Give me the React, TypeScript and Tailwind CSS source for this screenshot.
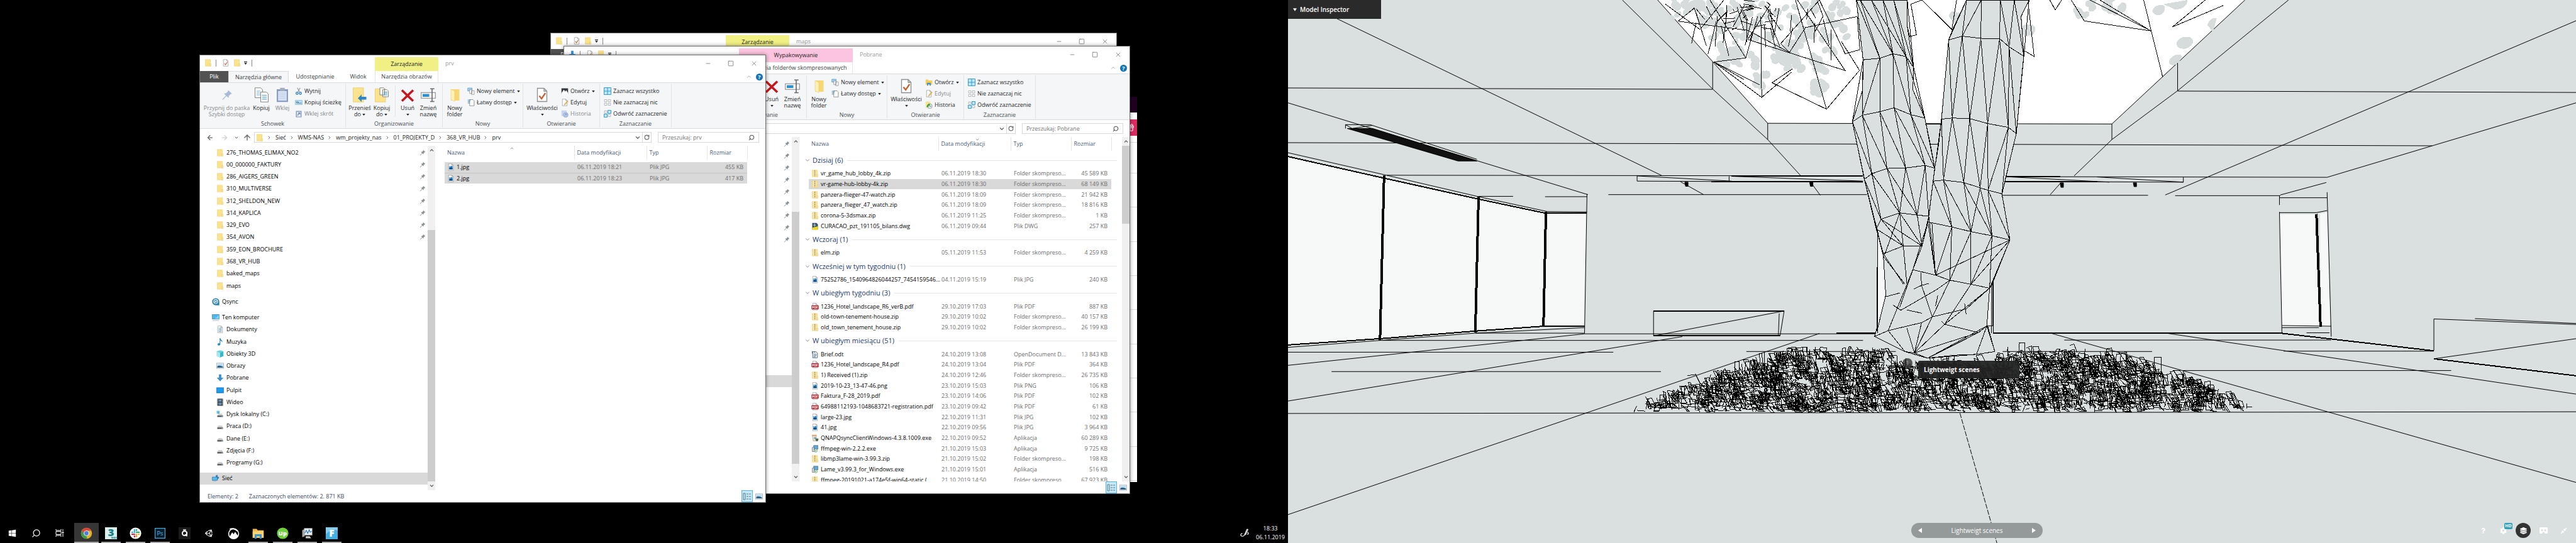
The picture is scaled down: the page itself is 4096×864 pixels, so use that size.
import type { ReactNode } from "react";
import { clsx } from "clsx";
import { FaCog, FaCompressAlt, FaLayerGroup, FaQuestion, FaUnity, FaWindows } from "react-icons/fa";
import {
  ArrowLeft,
  ArrowRight,
  ArrowUp,
  ChevronDown,
  ChevronRight,
  ChevronUp,
  Gift,
  Minus,
  RotateCw,
  Search,
  Square,
  X,
} from "lucide-react";

type IconName =
  | "folder"
  | "openFolder"
  | "check"
  | "zip"
  | "jpg"
  | "pdf"
  | "dwg"
  | "odt"
  | "exe"
  | "setup"
  | "download"
  | "qsync"
  | "computer"
  | "documents"
  | "music"
  | "objects"
  | "pictures"
  | "desktop"
  | "video"
  | "systemDisk"
  | "disk"
  | "network"
  | "pin"
  | "copy"
  | "paste"
  | "cut"
  | "path"
  | "shortcut"
  | "moveTo"
  | "copyTo"
  | "delete"
  | "rename"
  | "newItem"
  | "easyAccess"
  | "openImage"
  | "explorer"
  | "edit"
  | "history"
  | "historyOn"
  | "selectAll"
  | "selectNone"
  | "invert";

const sheet = <path d="M3 1h7l3 3v11H3z M10 1v3h3" fill="#fff" stroke="#8a8f94" strokeWidth="0.9" />;
const folderShape = (
  <>
    <path d="M2 1h11v14H2z" fill="#fbe38e" stroke="#e9c65f" strokeWidth="0.6" />
    <path d="M11.5 10h2.5v5h-2.5z" fill="#fdf0b8" stroke="#e0b84c" strokeWidth="0.6" />
  </>
);
const diskShape = (
  <>
    <path d="M4 7h8l2 4H2z" fill="#c9cccd" />
    <path d="M2 11h12v3H2z" fill="#4b4f52" />
    <path d="M11 12h2v1h-2z" fill="#9fe0d0" />
  </>
);

const ICONS: Record<IconName, ReactNode> = {
  folder: folderShape,
  openFolder: (
    <>
      <path d="M4 2h9v12H4z" fill="#f7d774" />
      <path d="M4 2l4 2v11l-4-2z" fill="#fff0b5" stroke="#ecc961" strokeWidth="0.4" />
    </>
  ),
  check: (
    <>
      {sheet}
      <path d="M5 9l2.4 3L11.5 6" fill="none" stroke="#c8622d" strokeWidth="1.5" />
    </>
  ),
  zip: (
    <>
      {folderShape}
      <path d="M7.5 1v14" stroke="#fff6cf" strokeWidth="3.4" />
      <path d="M7.5 1v14" stroke="#5d5640" strokeWidth="2" strokeDasharray="1 1" />
    </>
  ),
  jpg: (
    <>
      {sheet}
      <path d="M4.5 5.5h7v7h-7z" fill="#1c7fc2" />
      <path d="M4.5 10l2-3 2 2.5 1.5-1.5 1.5 2.5v2h-7z" fill="#0f4f86" />
      <path d="M5.5 8l1-2 1 2" fill="none" stroke="#fff" strokeWidth="0.8" />
    </>
  ),
  pdf: (
    <>
      {sheet}
      <rect x="0.5" y="5" width="15" height="8.5" rx="1" fill="#b3202f" />
      <text x="8" y="11.6" fontSize="6.5" fontWeight="700" textAnchor="middle" fill="#fff">
        PDF
      </text>
    </>
  ),
  dwg: (
    <>
      <path d="M2 1h9l3 3v11H2z" fill="#33536b" />
      <path d="M2 11l12-3v7H2z" fill="#f2d618" />
      <path d="M7 2v7M4 5.5h6" stroke="#e6f0f6" strokeWidth="1" />
    </>
  ),
  odt: (
    <>
      <path d="M3 2h7l3 3v10H3z" fill="#fff" stroke="#3f5a78" strokeWidth="1.2" />
      <path d="M2 1v5M5 8h6M5 10.5h6M5 13h4" stroke="#2f4a68" strokeWidth="1.1" />
      <path d="M5 5q2-3 4 0" fill="none" stroke="#2f4a68" />
    </>
  ),
  exe: (
    <>
      <path d="M5 1h9v8H5z" fill="#58a9dc" stroke="#4c5560" strokeWidth="0.8" />
      <path d="M2 5h4v9H2z" fill="#ddd" stroke="#4c5560" strokeWidth="0.8" />
      <circle cx="9.5" cy="12" r="3.3" fill="#e9f5ea" stroke="#4c7a55" strokeWidth="0.8" />
      <path d="M8.5 10.5v3l2.5-1.5z" fill="#2c9b3b" />
    </>
  ),
  setup: (
    <>
      <path d="M2 2h9l-1 12H4z" fill="#f2e4d2" stroke="#9c8a72" strokeWidth="0.8" />
      <path d="M1 1h10v3H2z" fill="#e2a877" />
      <circle cx="8" cy="8" r="2.5" fill="#77a8c9" />
      <path d="M9 9h6v3q-1 3-3 3t-3-3z" fill="#4c6b50" />
    </>
  ),
  download: <path d="M5.5 1h5v7H15l-7 7.5L1 8h4.5z" fill="#3a8fd0" />,
  qsync: (
    <>
      <path d="M8 .5A7.5 7.5 0 0115.500 8v7.500H8a7.500 7.500 0 010-15z" fill="#2e7fa8" />
      <circle cx="8" cy="7.8" r="5" fill="#d8eef7" />
      <path
        d="M5.3 8a2.7 2.7 0 014.9-1.5M10.7 7.8a2.7 2.7 0 01-4.9 1.5"
        fill="none"
        stroke="#2273a0"
        strokeWidth="1.5"
      />
    </>
  ),
  computer: (
    <>
      <path d="M.5 2h15v9.5H.5z" fill="#4db8f2" stroke="#3b7ea8" />
      <path d="M15 2.5v8.5H6z" fill="#7fd1fa" />
      <path d="M1 14.5h14" stroke="#8fa6b4" />
    </>
  ),
  documents: (
    <>
      {sheet}
      <path d="M5 5h2M8 5h3M5 7.5h6M5 10h2M8 10h3M5 12.5h6" stroke="#3f86b4" strokeWidth="1.1" />
    </>
  ),
  music: (
    <>
      <ellipse cx="5.5" cy="13" rx="3" ry="2.5" fill="#2b87bd" />
      <path d="M7 13V0h1.5q.5 3 3.5 5 1.5 2 0 5 .5-3.5-3.5-5v8z" fill="#2b87bd" />
    </>
  ),
  objects: (
    <>
      <path d="M8 .5l7 2.5v10l-7 2.5-7-2.5V3z" fill="#35b8cc" />
      <path d="M1 3l7 2.5v10l-7-2.5z" fill="#a8e6ee" />
      <path d="M8 .5l7 2.5-7 2.5L1 3z" fill="#69d3e0" />
    </>
  ),
  pictures: (
    <>
      <path d="M.5 2.5h15v11H.5z" fill="#fff" stroke="#8d9599" />
      <path d="M2 4h12v8H2z" fill="#b9dcf2" />
      <path d="M2 9q5-3 12 1v2H2z" fill="#2c6086" />
    </>
  ),
  desktop: (
    <>
      <path d="M.5 2.5h15v11H.5z" fill="#1c9cf0" stroke="#1a6fae" />
      <path d="M1 12.5h14" stroke="#0f5c98" strokeDasharray="1 1" />
    </>
  ),
  video: (
    <>
      <path d="M2 .5h12v15H2z" fill="#2b3136" />
      <path d="M5 2h6v5H5zM5 8.500h6V14H5z" fill="#6d90b8" />
      <path d="M3.5 1v14M12.5 1v14" stroke="#fff" strokeDasharray="1 1" />
    </>
  ),
  systemDisk: (
    <>
      {diskShape}
      <path d="M1 1h2.500v2.500H1zM4 1h2.500v2.500H4zM1 4h2.500v2.500H1zM4 4h2.500v2.500H4z" fill="#2fb0cf" />
    </>
  ),
  disk: diskShape,
  network: (
    <>
      <path d="M8 2l4-1.5v3l3.5 3-3.5 4H8z" fill="#3c81ad" />
      <path d="M.5 5.5h11v7H.5z" fill="#5ab8ee" stroke="#2d78a8" />
      <path d="M3 14.5h6" stroke="#9db4c2" />
    </>
  ),
  pin: (
    <path
      d="M9.5 1l5.5 5.5-2 .3-2.500 2.500-.3 3.200L7.300 9.600 2 15l-.8-.8L6.500 8.800 3.600 6l3.200-.4L9.200 3z"
      fill="currentColor"
    />
  ),
  copy: (
    <>
      <path d="M1 .5h6l2 2V11H1z" fill="#fff" stroke="#777" strokeWidth="0.6" />
      <path d="M2.5 4h4M2.5 6h4M2.5 8h4" stroke="#69aede" strokeWidth="0.8" />
      <path d="M7 5h6l2 2v8.5H7z" fill="#fff" stroke="#777" strokeWidth="0.6" />
      <path d="M8.5 8.500h5M8.5 10.500h5M8.5 12.500h5" stroke="#3b93d0" strokeWidth="0.8" />
    </>
  ),
  paste: (
    <>
      <path d="M2 2h12v13.5H2z" fill="#8a9cc4" />
      <path d="M3.5 4h9v10h-9z" fill="#dbe5f5" />
      <path d="M5.5.5h5V4h-5z" fill="#a5adbd" />
      <path d="M4.5 6h7M4.5 8h7M4.5 10h7M4.5 12h7" stroke="#b4c4e2" strokeWidth="0.6" />
    </>
  ),
  cut: (
    <>
      <path d="M5 1l5 9M11 1L6 10" stroke="#8b9298" strokeWidth="1.4" />
      <circle cx="4.5" cy="12.5" r="2.3" fill="none" stroke="#1f7bb8" strokeWidth="1.6" />
      <circle cx="11.5" cy="12.5" r="2.3" fill="none" stroke="#1f7bb8" strokeWidth="1.6" />
    </>
  ),
  path: (
    <>
      <path d="M.5 3.5h15v9H.5z" fill="#b9ddf5" stroke="#7db7dd" />
      <path d="M3 6l2 4M6 6l2 4M9 9.5h1M11 9.5h1M13 9.5h1" stroke="#17354c" strokeWidth="1.2" />
    </>
  ),
  shortcut: (
    <>
      <path d="M2 2h12v13.5H2z" fill="#8a9cc4" />
      <path d="M4 4h8v10H4z" fill="#e6edf8" />
      <path d="M6 12q0-4 4-5M7 6h3.5v3.5" fill="none" stroke="#6a80ae" strokeWidth="1.4" />
    </>
  ),
  moveTo: (
    <>
      <path d="M1 .5h11v15H1z" fill="#fbe38e" stroke="#e9c65f" strokeWidth="0.5" />
      <path d="M6 11.5l4-4V10h5v3h-5v2.5z" fill="#2f86c6" />
    </>
  ),
  copyTo: (
    <>
      <path d="M1 1.5h11v14H1z" fill="#fbe38e" stroke="#e9c65f" strokeWidth="0.5" />
      <path d="M6 .5h4l1 1V8H6zM9 2.5h4.5L15 4v6H9z" fill="#fff" stroke="#777" strokeWidth="0.6" />
      <path d="M10 5h4M10 6.5h4M10 8h4" stroke="#3b93d0" strokeWidth="0.6" />
    </>
  ),
  delete: <path d="M2 3l12 11.5M14 3L2 14.5" stroke="#c8151b" strokeWidth="2.4" />,
  rename: (
    <>
      <path d="M.5 5.5h15v6H.5z" fill="#fff" stroke="#7d858c" strokeWidth="0.7" />
      <path d="M2 7h7v3H2z" fill="#2c8ed2" />
      <path d="M12 1.5V15M10 1.5h4.5M10 15h4.5" stroke="#666c72" strokeWidth="1.1" />
    </>
  ),
  newItem: (
    <>
      <path d="M1 1.5h9v6H1z" fill="#9fd2f0" stroke="#4a94c2" />
      <path d="M5 5h5v8H5zM9 7h5.5v8H9z" fill="#fff" stroke="#777" strokeWidth="0.9" />
    </>
  ),
  easyAccess: (
    <>
      <path d="M5 2h7l2.5 2.5V15H5z" fill="#fff" stroke="#777" />
      <path d="M1 3h6M1 6h5M1 9h4" stroke="#2f79ad" strokeWidth="1.2" />
    </>
  ),
  openImage: (
    <>
      <path d="M1 2h14v12H1z" fill="#333a40" />
      <path d="M1 12l5-7 3 4 2-3 4 6v3H1z" fill="#fff" />
    </>
  ),
  explorer: (
    <>
      <path d="M1 2h5l1 2h8v9H1z" fill="#f5cd5b" />
      <path d="M4 15V9h8v6H9.500v-3h-3v3z" fill="#3f93c6" />
    </>
  ),
  edit: (
    <>
      {sheet}
      <path d="M7 12l6.500-8L15 5.500 8.500 13l-2 .5z" fill="#f0b43c" stroke="#b07a1f" strokeWidth="0.4" />
    </>
  ),
  history: (
    <>
      <path d="M1 1h11v12H1z" fill="#c4d5ef" />
      <circle cx="10" cy="10.5" r="5" fill="#b0c4e6" stroke="#8ca4cf" />
      <path d="M10 7.5v3l3-2" fill="none" stroke="#6f8abb" />
    </>
  ),
  historyOn: (
    <>
      <path d="M1 1h10v13H1z" fill="#fbe38e" />
      <circle cx="10" cy="10.5" r="5" fill="#e9eef2" stroke="#7a858d" />
      <path d="M3 12q1-6 7-7v2l-4 6z" fill="#36a23c" />
      <path d="M10 8v3h3" fill="none" stroke="#5e676e" />
    </>
  ),
  selectAll: <path d="M.7.7h14.6v14.6H.7zM8 1v14M1 8h14" fill="#bfe6fa" stroke="#2f9ac9" strokeWidth="1.3" />,
  selectNone: (
    <path d="M1.5 2h5v4.500h-5zM9.5 2h5v4.500h-5zM1.5 9.500h5V14h-5zM9.5 9.500h5V14h-5z" fill="#fff" stroke="#9aa0a5" />
  ),
  invert: (
    <>
      <path d="M1.5 2h5v4.500h-5zM9.5 9.500h5V14h-5z" fill="#fff" stroke="#9aa0a5" />
      <path d="M8.7.7h6.6v6.6H8.700zM.7 8.700h6.6v6.6H.7z" fill="#bfe6fa" stroke="#2f9ac9" strokeWidth="1.3" />
    </>
  ),
};

function Icon({ name, className = "size-3" }: { name: IconName; className?: string }) {
  return (
    <svg viewBox="0 0 16 16" className={clsx("shrink-0", className)} aria-hidden="true">
      {ICONS[name]}
    </svg>
  );
}

function Caret() {
  return (
    <svg viewBox="0 0 6 4" className="h-[3px] w-[5px] shrink-0" aria-hidden="true">
      <path d="M0 0h6L3 4z" fill="#222" />
    </svg>
  );
}

/* ---------- Explorer ribbon ---------- */

function RibbonGroup({ label, width, children }: { label: string; width: string; children?: ReactNode }) {
  return (
    <div className={clsx("my-px flex flex-col border-r border-[#e1e3e5]", width)}>
      <div className="flex h-[60px] pt-[3px]">{children}</div>
      <div className="text-center leading-[12px] text-[#4a4f55]">{label}</div>
    </div>
  );
}

type BigButtonProps = { icon: IconName; lines: string[]; width: string; caret?: boolean; muted?: boolean };

function BigButton({ icon, lines, width, caret, muted }: BigButtonProps) {
  return (
    <button
      type="button"
      className={clsx(
        "flex flex-col items-center pt-[3px] leading-[10px] whitespace-nowrap",
        width,
        muted ? "text-[#85898d]" : "text-[#26292c]",
      )}
    >
      <Icon name={icon} className={clsx("mb-[4px] size-6", icon === "pin" && "p-[3px] text-[#a9b8d6]")} />
      {lines.map((line, i) => (
        <span key={line} className="flex items-center gap-[2px]">
          {line}
          {caret && lines.length > 1 && i === lines.length - 1 ? <Caret /> : null}
        </span>
      ))}
      {caret && lines.length === 1 ? (
        <span className="flex h-[10px] items-center">
          <Caret />
        </span>
      ) : null}
    </button>
  );
}

type SmallButtonProps = { icon: IconName; label: string; caret?: boolean; muted?: boolean };

function SmallButton({ icon, label, caret, muted }: SmallButtonProps) {
  return (
    <button
      type="button"
      className={clsx(
        "flex h-[18px] items-center gap-[3px] whitespace-nowrap",
        muted ? "text-[#85898d]" : "text-[#26292c]",
      )}
    >
      <Icon name={icon} />
      {label}
      {caret ? <Caret /> : null}
    </button>
  );
}

function Ribbon({ covered }: { covered: boolean }) {
  return (
    <div className="flex h-[74px] border-y border-[#dadbdc] bg-[#f5f6f7]">
      {covered ? (
        <div className="w-[232px]" />
      ) : (
        <RibbonGroup label="Schowek" width="w-[232px]">
          <BigButton icon="pin" lines={["Przypnij do paska", "Szybki dostęp"]} width="ml-1 w-[77px]" muted />
          <BigButton icon="copy" lines={["Kopiuj"]} width="w-[33px]" />
          <BigButton icon="paste" lines={["Wklej"]} width="w-[34px]" muted />
          <div className="ml-[3px]">
            <SmallButton icon="cut" label="Wytnij" />
            <SmallButton icon="path" label="Kopiuj ścieżkę" />
            <SmallButton icon="shortcut" label="Wklej skrót" muted />
          </div>
        </RibbonGroup>
      )}
      <RibbonGroup label="Organizowanie" width="w-[154px]">
        {covered ? (
          <div className="mr-px w-[79px]" />
        ) : (
          <>
            <BigButton icon="moveTo" lines={["Przenieś", "do"]} width="ml-1 w-[36px]" caret />
            <BigButton icon="copyTo" lines={["Kopiuj", "do"]} width="w-[34px]" caret />
            <div className="mr-px ml-1 h-[50px] border-l border-[#e1e3e5]" />
          </>
        )}
        <BigButton icon="delete" lines={["Usuń"]} width="w-[36px]" caret />
        <BigButton icon="rename" lines={["Zmień", "nazwę"]} width="w-[30px]" />
      </RibbonGroup>
      <RibbonGroup label="Nowy" width="w-[128px]">
        <BigButton icon="openFolder" lines={["Nowy", "folder"]} width="ml-1 w-[30px]" />
        <div className="ml-[5px]">
          <SmallButton icon="newItem" label="Nowy element" caret />
          <SmallButton icon="easyAccess" label="Łatwy dostęp" caret />
        </div>
      </RibbonGroup>
      <RibbonGroup label="Otwieranie" width="w-[122px]">
        <BigButton icon="check" lines={["Właściwości"]} width="ml-1 w-[52px]" caret />
        <div className="ml-1">
          <SmallButton icon={covered ? "explorer" : "openImage"} label="Otwórz" caret />
          <SmallButton icon="edit" label="Edytuj" muted={covered} />
          <SmallButton icon={covered ? "historyOn" : "history"} label="Historia" muted={!covered} />
        </div>
      </RibbonGroup>
      <RibbonGroup label="Zaznaczanie" width="w-[114px]">
        <div className="ml-[6px]">
          <SmallButton icon="selectAll" label="Zaznacz wszystko" />
          <SmallButton icon="selectNone" label="Nie zaznaczaj nic" />
          <SmallButton icon="invert" label="Odwróć zaznaczenie" />
        </div>
      </RibbonGroup>
    </div>
  );
}

/* ---------- Explorer navigation pane ---------- */

type NavItem = { icon: IconName; label: string; root?: boolean; pinned?: boolean; selected?: boolean };

const pinned = (label: string): NavItem => ({ icon: "folder", label, pinned: true });
const folder = (label: string): NavItem => ({ icon: "folder", label });

const PINNED = [
  "276_THOMAS_ELIMAX_NO2",
  "00_000000_FAKTURY",
  "286_AIGERS_GREEN",
  "310_MULTIVERSE",
  "312_SHELDON_NEW",
  "314_KAPLICA",
  "329_EVO",
  "354_AVON",
].map(pinned);

const NAV_GROUPS: NavItem[][] = [
  [...PINNED, ...["359_EON_BROCHURE", "368_VR_HUB", "baked_maps", "maps"].map(folder)],
  [{ icon: "qsync", label: "Qsync", root: true }],
  [
    { icon: "computer", label: "Ten komputer", root: true },
    { icon: "documents", label: "Dokumenty" },
    { icon: "music", label: "Muzyka" },
    { icon: "objects", label: "Obiekty 3D" },
    { icon: "pictures", label: "Obrazy" },
    { icon: "download", label: "Pobrane" },
    { icon: "desktop", label: "Pulpit" },
    { icon: "video", label: "Wideo" },
    { icon: "systemDisk", label: "Dysk lokalny (C:)" },
    { icon: "disk", label: "Praca (D:)" },
    { icon: "disk", label: "Dane (E:)" },
    { icon: "disk", label: "Zdjęcia (F:)" },
    { icon: "disk", label: "Programy (G:)" },
  ],
  [{ icon: "network", label: "Sieć", root: true, selected: true }],
];

function NavPane() {
  return (
    <nav className="flex w-[362px] flex-col gap-[6px] pt-px pb-[9px]" aria-label="Okienko nawigacji">
      {NAV_GROUPS.map((items, g) => (
        <ul key={g} className="flex flex-col" style={{ flex: `${items.length} 1 0px` }}>
          {items.map((item) => (
            <li key={item.label} className={clsx("flex flex-1", item.selected && "bg-[#d9d9d9]")}>
              <button
                type="button"
                className={clsx(
                  "flex w-full items-center gap-[4px] pr-[3px] text-left leading-[16px] text-black",
                  item.root ? "pl-[19px]" : "pl-[26px]",
                )}
              >
                <Icon name={item.icon} />
                <span className="flex-1">{item.label}</span>
                {item.pinned ? <Icon name="pin" className="size-[10px] text-[#8b9297]" /> : null}
              </button>
            </li>
          ))}
        </ul>
      ))}
    </nav>
  );
}

// Right edge of a navigation pane whose labels lie under another window.
function CoveredNavPane() {
  return (
    <div className="flex w-[362px] flex-col items-stretch pt-px" aria-hidden="true">
      {Array.from({ length: 9 }, (_, i) => (
        <div key={i} className="flex h-[19px] items-center justify-end pr-[3px]">
          <Icon name="pin" className="size-[10px] text-[#8b9297]" />
        </div>
      ))}
      <div className="mt-[207px] h-[19px] bg-[#d9d9d9]" />
    </div>
  );
}

function ScrollBar({ before, thumb }: { before: string; thumb: string }) {
  return (
    <div className="flex w-3 shrink-0 flex-col bg-[#f0f0f0]">
      <ChevronUp className="mx-auto h-[14px] w-[9px] text-[#505050]" strokeWidth={3} />
      <div className={before} />
      <div className={clsx("bg-[#cdcdcd]", thumb)} />
      <div className="flex-1" />
      <ChevronDown className="mx-auto h-[14px] w-[9px] text-[#505050]" strokeWidth={3} />
    </div>
  );
}

/* ---------- Explorer file list ---------- */

type FileRow = { icon: IconName; name: string; date: string; kind: string; size: string; selected?: boolean };
type FileGroup = { title?: string; files: FileRow[] };

const ZIP = "Folder skompreso...";
const file = (icon: IconName, name: string, date: string, kind: string, size: string, selected = false): FileRow => ({
  icon,
  name,
  date,
  kind,
  size,
  selected,
});

const FILES_PRV: FileGroup[] = [
  {
    files: [
      file("jpg", "1.jpg", "06.11.2019 18:21", "Plik JPG", "455 KB", true),
      file("jpg", "2.jpg", "06.11.2019 18:23", "Plik JPG", "417 KB", true),
    ],
  },
];

const FILES_POBRANE: FileGroup[] = [
  {
    title: "Dzisiaj (6)",
    files: [
      file("zip", "vr_game_hub_lobby_4k.zip", "06.11.2019 18:30", ZIP, "45 589 KB"),
      file("zip", "vr-game-hub-lobby-4k.zip", "06.11.2019 18:30", ZIP, "68 149 KB", true),
      file("zip", "panzera-flieger-47-watch.zip", "06.11.2019 18:09", ZIP, "21 942 KB"),
      file("zip", "panzera_flieger_47_watch.zip", "06.11.2019 18:09", ZIP, "18 816 KB"),
      file("zip", "corona-5-3dsmax.zip", "06.11.2019 11:25", ZIP, "1 KB"),
      file("dwg", "CURACAO_pzt_191105_bilans.dwg", "06.11.2019 09:44", "Plik DWG", "257 KB"),
    ],
  },
  { title: "Wczoraj (1)", files: [file("zip", "elm.zip", "05.11.2019 11:53", ZIP, "4 259 KB")] },
  {
    title: "Wcześniej w tym tygodniu (1)",
    files: [file("jpg", "75252786_1540964826044257_7454159546...", "04.11.2019 15:19", "Plik JPG", "240 KB")],
  },
  {
    title: "W ubiegłym tygodniu (3)",
    files: [
      file("pdf", "1236_Hotel_landscape_R6_verB.pdf", "29.10.2019 17:03", "Plik PDF", "887 KB"),
      file("zip", "old-town-tenement-house.zip", "29.10.2019 10:02", ZIP, "40 157 KB"),
      file("zip", "old_town_tenement_house.zip", "29.10.2019 10:02", ZIP, "26 199 KB"),
    ],
  },
  {
    title: "W ubiegłym miesiącu (51)",
    files: [
      file("odt", "Brief.odt", "24.10.2019 13:08", "OpenDocument D...", "13 843 KB"),
      file("pdf", "1236_Hotel_landscape_R4.pdf", "24.10.2019 13:04", "Plik PDF", "364 KB"),
      file("zip", "1) Received (1).zip", "24.10.2019 12:46", ZIP, "26 735 KB"),
      file("jpg", "2019-10-23_13-47-46.png", "23.10.2019 15:03", "Plik PNG", "106 KB"),
      file("pdf", "Faktura_F-28_2019.pdf", "23.10.2019 14:06", "Plik PDF", "102 KB"),
      file("pdf", "64988112193-1048683721-registration.pdf", "23.10.2019 09:42", "Plik PDF", "61 KB"),
      file("jpg", "large-23.jpg", "22.10.2019 11:31", "Plik JPG", "102 KB"),
      file("jpg", "41.jpg", "22.10.2019 09:56", "Plik JPG", "3 964 KB"),
      file("setup", "QNAPQsyncClientWindows-4.3.8.1009.exe", "22.10.2019 09:52", "Aplikacja", "60 289 KB"),
      file("exe", "ffmpeg-win-2.2.2.exe", "21.10.2019 15:03", "Aplikacja", "9 725 KB"),
      file("zip", "libmp3lame-win-3.99.3.zip", "21.10.2019 15:02", ZIP, "198 KB"),
      file("exe", "Lame_v3.99.3_for_Windows.exe", "21.10.2019 15:01", "Aplikacja", "516 KB"),
      file("zip", "ffmpeg-20191021-a174e5f-win64-static (...", "21.10.2019 14:50", ZIP, "67 923 KB"),
    ],
  },
];

function HeaderCell({ label, sort, width }: { label: string; sort?: "up" | "down"; width: string }) {
  const Arrow = sort === "up" ? ChevronUp : ChevronDown;
  return (
    <th
      scope="col"
      className={clsx("relative border-r border-[#e5e5e5] pl-[4px] text-left font-normal text-[#4c607a]", width)}
    >
      {label}
      {sort ? <Arrow className="absolute top-0 left-1/2 size-2 text-[#666]" /> : null}
    </th>
  );
}

function FileTable({ groups, grouped }: { groups: FileGroup[]; grouped: boolean }) {
  return (
    <div className="relative h-full min-h-0 flex-1 overflow-hidden pl-[15px]">
      <table
        className={clsx(
          "w-[481px] table-fixed border-collapse leading-[14px] whitespace-nowrap text-[#6d6d6d]",
          grouped && "absolute h-[554px]",
        )}
      >
        <thead>
          <tr className="h-[22px]">
            <HeaderCell label="Nazwa" width="w-[206px]" sort={grouped ? undefined : "up"} />
            <HeaderCell label="Data modyfikacji" width="w-[115px]" sort={grouped ? "down" : undefined} />
            <HeaderCell label="Typ" width="w-[96px]" />
            <HeaderCell label="Rozmiar" width="w-[64px]" />
          </tr>
        </thead>
        {groups.map((group, g) => (
          <tbody key={g}>
            {g === 0 ? (
              <tr className={grouped ? "h-[2px]" : "h-[4px]"}>
                <td colSpan={4} className="p-0" />
              </tr>
            ) : null}
            {group.title ? (
              <tr className="h-[25px]">
                <th colSpan={4} scope="rowgroup" className="p-0 font-normal">
                  <div className="-mr-[9px] -ml-[7px] flex items-center gap-[3px] text-[11px] text-[#1e3b6e]">
                    <ChevronDown className="size-[10px] text-[#777]" />
                    {group.title}
                    <span className="ml-[4px] flex-1 border-t border-[#e0e3e8]" />
                  </div>
                </th>
              </tr>
            ) : null}
            {group.files.map((f) => (
              <tr
                key={f.name}
                className={clsx(
                  grouped ? "h-[16px]" : "h-[17px]",
                  f.selected && "bg-[#d9d9d9]",
                  f.selected && !grouped && "border-b border-[#c3c3c3] last:border-0",
                )}
              >
                <td className="p-0 pl-[4px]">
                  <span className="flex items-center gap-[3px] text-black">
                    <Icon name={f.icon} />
                    {f.name}
                  </span>
                </td>
                <td className="p-0 pl-[5px]">{f.date}</td>
                <td className="p-0 pl-[5px]">{f.kind}</td>
                <td className="p-0 pr-[6px] text-right">{f.size}</td>
              </tr>
            ))}
          </tbody>
        ))}
      </table>
    </div>
  );
}

/* ---------- Explorer window ---------- */

type ExplorerProps = {
  title: string;
  position: string;
  icon?: IconName;
  toolLabel: string;
  toolTab: string;
  toolWidth: string;
  toolColor: string;
  /** The left part of the window lies under another one. */
  covered?: boolean;
  children?: ReactNode;
};

function ExplorerWindow({
  title,
  position,
  icon = "folder",
  toolLabel,
  toolTab,
  toolWidth,
  toolColor,
  covered = false,
  children,
}: ExplorerProps) {
  return (
    <section
      aria-label={title}
      className={clsx(
        "absolute flex h-[711px] w-[899px] flex-col bg-white shadow-[0_0_6px_1px_rgba(0,0,0,0.45)] outline-1 outline-[#6f6f6f]",
        position,
      )}
    >
      <header className="flex h-[25px] text-[#222]">
        <div className="flex w-[278px] items-center pb-px pl-[7px]">
          <Icon name={icon} />
          <span className="mx-[6px] h-[11px] border-l border-[#888]" />
          <Icon name="check" className="ml-[3px] size-3" />
          <Icon name="folder" className="ml-[6px] size-3" />
          <span className="ml-[5px] flex flex-col items-center gap-px">
            <span className="w-[5px] border-t border-black" />
            <Caret />
          </span>
          <span className="ml-[7px] h-[11px] border-l border-[#888]" />
        </div>
        <div className={clsx("mt-[3px] flex items-center justify-center", toolWidth, toolColor)}>{toolLabel}</div>
        <h2 className="flex flex-1 items-center pl-[11px] text-[#9a9a9a]">{title}</h2>
        <div className="flex items-center text-[#777]">
          <button type="button" aria-label="Minimalizuj" className="flex w-9 justify-center">
            <Minus className="size-[10px]" />
          </button>
          <button type="button" aria-label="Maksymalizuj" className="flex w-9 justify-center">
            <Square className="size-[10px]" />
          </button>
          <button type="button" aria-label="Zamknij" className="flex w-[37px] justify-center">
            <X className="size-[12px]" strokeWidth={1.5} />
          </button>
        </div>
      </header>

      <div className="flex h-[18px] text-[#3b3f44]">
        <button type="button" className="w-[45px] bg-[#525252] text-white">
          Plik
        </button>
        {covered ? (
          <div className="w-[233px]" />
        ) : (
          <>
            <button type="button" className="-mb-px w-[96px] border-x border-t border-[#dadbdc] bg-[#f5f6f7]">
              Narzędzia główne
            </button>
            <button type="button" className="w-[84px]">
              Udostępnianie
            </button>
            <button type="button" className="w-[53px]">
              Widok
            </button>
          </>
        )}
        <button type="button" className={clsx("border-x border-[#e4e4e4] whitespace-nowrap", toolWidth)}>
          {toolTab}
        </button>
        <div className="flex flex-1 items-center justify-end gap-[6px] pr-[4px]">
          <button type="button" aria-label="Minimalizuj Wstążkę">
            <ChevronUp className="size-[10px] text-[#999]" />
          </button>
          <button
            type="button"
            aria-label="Pomoc"
            className="size-[11px] rounded-full bg-[#1273b5] text-[9px] leading-[11px] font-bold text-white"
          >
            ?
          </button>
        </div>
      </div>
      {children}
    </section>
  );
}

function AddressBar({ title, crumbs }: { title: string; crumbs: string[] }) {
  return (
    <div className="flex h-[27px] items-center pr-[10px] text-[#222]">
      <div className="flex w-[86px] items-center pl-[10px] text-[#6a6a6a]">
        <ArrowLeft className="size-3" strokeWidth={2.5} />
        <ArrowRight className="ml-[11px] size-3 text-[#d0d0d0]" strokeWidth={2.5} />
        <ChevronDown className="ml-[9px] size-[8px]" strokeWidth={3} />
        <ArrowUp className="ml-[6px] size-[14px]" strokeWidth={2.5} />
      </div>
      <div className="flex h-[17px] flex-1 items-center border border-[#d9d9d9] pl-[2px]">
        <Icon name="folder" />
        {crumbs.map((crumb) => (
          <span key={crumb} className="flex items-center">
            <ChevronRight className="mr-[6px] ml-[5px] size-[8px] text-[#777]" strokeWidth={3} />
            <button type="button">{crumb}</button>
          </span>
        ))}
        <ChevronDown className="mr-[2px] ml-auto size-[10px] text-[#666]" strokeWidth={3} />
        <button
          type="button"
          aria-label="Odśwież"
          className="flex h-full w-[14px] items-center justify-center border-l border-[#d9d9d9] text-[#666]"
        >
          <RotateCw className="size-[9px]" strokeWidth={3} />
        </button>
      </div>
      <label className="ml-[10px] flex h-[17px] w-[161px] items-center border border-[#d9d9d9] pr-[6px] pl-[6px]">
        <input
          type="text"
          aria-label={`Przeszukaj: ${title}`}
          placeholder={`Przeszukaj: ${title}`}
          className="min-w-0 flex-1 outline-none placeholder:text-[#757575]"
        />
        <Search className="size-[10px] -scale-x-100 text-[#555]" strokeWidth={2.5} />
      </label>
    </div>
  );
}

function StatusBar({ items }: { items: string[] }) {
  return (
    <footer className="flex h-[19px] items-center pl-[12px] text-[#3c4a60]">
      {items.map((item) => (
        <span key={item} className="mr-[17px]">
          {item}
        </span>
      ))}
      <button
        type="button"
        aria-label="Szczegóły"
        className="ml-auto flex h-full w-[18px] items-center justify-center border border-[#58b5d8] bg-[#c5e8f7]"
      >
        <svg viewBox="0 0 14 12" className="h-3 w-[14px]" aria-hidden="true">
          <path d="M1 1h3v10H1zM6 2h3M10 2h3M6 6h3M10 6h3M6 10h3M10 10h3" fill="none" stroke="#5b7484" />
        </svg>
      </button>
      <button type="button" aria-label="Duże miniatury" className="mx-[4px]">
        <Icon name="pictures" />
      </button>
    </footer>
  );
}

/* ---------- Taskbar ---------- */

const TASKS: { label: string; art: ReactNode; running?: boolean; active?: boolean }[] = [
  {
    label: "Chrome",
    running: true,
    active: true,
    art: (
      <>
        <circle cx="12" cy="12" r="11" fill="#e4b52c" />
        <path d="M2.5 6.500L12 12l1 11A11 11 0 012.500 6.500z" fill="#3e9b50" />
        <path d="M12 7h9.800A11 11 0 002.500 6.500L7.500 14z" fill="#d7493b" />
        <circle cx="12" cy="12" r="5.5" fill="#fff" />
        <circle cx="12" cy="12" r="4.3" fill="#4a7fe0" />
      </>
    ),
  },
  {
    label: "3ds Max",
    running: true,
    art: (
      <>
        <path d="M0 0h24v24H0z" fill="#d9f0ef" />
        <text x="12" y="18" fontSize="21" fontWeight="800" textAnchor="middle" fill="#14808a">
          3
        </text>
        <text x="18" y="23" fontSize="5" fontWeight="700" textAnchor="middle" fill="#14808a">
          MAX
        </text>
      </>
    ),
  },
  {
    label: "Slack",
    running: true,
    art: (
      <>
        <circle cx="12" cy="12" r="11.5" fill="#fff" />
        <g strokeWidth="3" strokeLinecap="round">
          <path d="M10 5v5M5 10h1" stroke="#35b5d8" />
          <path d="M14 10h5M14 5v1" stroke="#2fa673" />
          <path d="M14 14v5M19 14h-1" stroke="#e3ab2c" />
          <path d="M10 14H5M10 19v-1" stroke="#d42458" />
        </g>
      </>
    ),
  },
  {
    label: "Photoshop",
    running: true,
    art: (
      <>
        <path d="M2 2h20v20H2z" fill="#0a1c29" stroke="#3fa9d8" strokeWidth="1.5" />
        <text x="12" y="16.5" fontSize="12" textAnchor="middle" fill="#4fb9ea">
          Ps
        </text>
      </>
    ),
  },
  {
    label: "Quixel",
    art: (
      <>
        <path d="M0 0h24v24H0z" fill="#1b1b1b" />
        <circle cx="12" cy="12" r="4.5" fill="none" stroke="#fff" strokeWidth="2.5" />
        <path d="M10 6V5h4v1M13 14l4 4M16.500 9v8" fill="none" stroke="#fff" strokeWidth="2" />
      </>
    ),
  },
  {
    label: "Unity",
    art: (
      <g color="#eee">
        <FaUnity x="3" y="3" size={18} />
      </g>
    ),
  },
  {
    label: "Marmoset",
    art: (
      <>
        <circle cx="12" cy="13" r="10" fill="none" stroke="#fff" strokeWidth="2" />
        <path d="M4 19l5-9 3 4 3-5 6 9q-3 5-9 5t-8-4z" fill="#fff" />
        <path d="M4 4q8-4 16 4" fill="none" stroke="#fff" strokeWidth="2" />
      </>
    ),
  },
  {
    label: "Eksplorator plików",
    running: true,
    art: (
      <>
        <path d="M1 3h8l2 3h12v15H1z" fill="#f0b94d" />
        <path d="M1 8h22v13H1z" fill="#f9d476" />
        <path d="M5 23v-9h14v9h-4v-5H9v5z" fill="#3f93c6" />
      </>
    ),
  },
  {
    label: "Upwork",
    running: true,
    art: (
      <>
        <circle cx="12" cy="12" r="11.5" fill="#6fcf3c" />
        <text x="12" y="16" fontSize="12" fontWeight="800" textAnchor="middle" fill="#fff">
          Up
        </text>
      </>
    ),
  },
  {
    label: "Monitor zasobów",
    running: true,
    art: (
      <>
        <path d="M2 6l5-3v15l-5 2z" fill="#aaa" />
        <path d="M6 2h16v14H6z" fill="#e9edf0" stroke="#888" />
        <path d="M7 12l3-6 3 6 3-7 2 5 3-2" fill="none" stroke="#2f79b5" strokeWidth="1.5" />
        <path d="M9 18h8l3 4H9z" fill="#c9c9c9" />
      </>
    ),
  },
  {
    label: "F",
    running: true,
    art: (
      <>
        <path d="M0 0h24v24H0z" fill="#45aee2" />
        <path d="M0 14q12-12 24-8V0H0z" fill="#82cdf0" />
        <text x="12" y="19" fontSize="20" fontWeight="800" textAnchor="middle" fill="#fff">
          F
        </text>
      </>
    ),
  },
];

function Taskbar() {
  return (
    <footer className="flex h-8 items-stretch bg-black text-white">
      <button type="button" aria-label="Start" className="flex w-[38px] items-center justify-center">
        <FaWindows className="size-[13px]" />
      </button>
      <button type="button" aria-label="Wyszukaj" className="flex w-[38px] items-center justify-center">
        <Search className="size-[15px] -scale-x-100" strokeWidth={2} />
      </button>
      <button type="button" aria-label="Widok zadań" className="mr-[4px] flex w-[38px] items-center justify-center">
        <svg viewBox="0 0 14 14" className="size-[14px]" aria-hidden="true">
          <path d="M1 1v2h8V1M1 13v-2h8v2M1 4.500h8v5H1zM12 1v3M12 8v5M11 5.500h2V7h-2z" fill="none" stroke="#fff" />
        </svg>
      </button>
      {TASKS.map((task) => (
        <button
          key={task.label}
          type="button"
          aria-label={task.label}
          className={clsx("relative flex w-[39px] items-center justify-center", task.active && "bg-[#363636]")}
        >
          <svg viewBox="0 0 24 24" className="size-[19px]" aria-hidden="true">
            {task.art}
          </svg>
          {task.running ? (
            <span
              className={clsx("absolute bottom-0 h-[2px] bg-[#a9a9a9]", task.active ? "inset-x-0" : "inset-x-[4px]")}
            />
          ) : null}
        </button>
      ))}
      <div className="ml-auto flex items-center gap-[11px] pr-[5px]">
        <svg viewBox="0 0 16 16" className="size-[14px]" aria-hidden="true">
          <path
            d="M4 9q-3 0-3 2.500T4 14q3 0 4-3l4-9q1-1.500 2 0L9 12M13 7q2 0 2 2t-3 1"
            fill="none"
            stroke="#fff"
            strokeWidth="1.3"
          />
        </svg>
        <time className="text-center text-[9px] leading-[14px]">
          18:33
          <br />
          06.11.2019
        </time>
      </div>
    </footer>
  );
}

/* ---------- Wireframe scene ---------- */

type Point = [number, number];

function createRandom(seed: number) {
  let s = seed;
  return () => {
    s = (s * 1664525 + 1013904223) % 4294967296;
    return s / 4294967296;
  };
}

// Trunk cross-sections, top to bottom. Neighbouring rings are joined by triangle edges.
const LEFT_TRUNK: Point[][] = [
  [[518, 0], [528, 0], [556, 0], [585, 0], [612, 0], [646, 0]],
  [[535, 217], [577, 211], [610, 195], [643, 205], [662, 245]],
  [[508, 442], [533, 418], [577, 405], [613, 391], [655, 416], [690, 428]],
  [[538, 650], [557, 630], [595, 611], [642, 609], [691, 600], [715, 610]],
  [[568, 830], [580, 795], [627, 772], [671, 780], [700, 784]],
  [[586, 920], [636, 892], [683, 892]],
];
const RIGHT_TRUNK: Point[][] = [
  [[795, 0], [832, 0], [880, 0], [915, 0], [952, 0]],
  [[750, 145], [784, 131], [831, 139], [878, 140], [902, 170], [939, 204]],
  [[732, 432], [759, 428], [803, 430], [848, 448], [900, 462], [920, 484]],
  [[711, 657], [737, 653], [788, 662], [829, 681], [849, 690], [884, 703]],
  [[698, 805], [758, 823], [806, 840], [859, 855], [904, 870]],
  [[660, 978], [717, 998], [753, 1016], [806, 1031], [853, 1045]],
];

function meshPath(rings: Point[][]) {
  const parts: string[] = [];
  rings.forEach((ring, r) => {
    parts.push("M" + ring.map((p) => p.join(" ")).join("L"));
    const next = rings[r + 1];
    if (!next) return;
    ring.forEach((p, i) => {
      const at = Math.round((i / (ring.length - 1)) * (next.length - 1));
      parts.push(`M${p[0]} ${p[1]}L${next[at][0]} ${next[at][1]}`);
      if (next[at + 1]) parts.push(`M${p[0]} ${p[1]}L${next[at + 1][0]} ${next[at + 1][1]}`);
    });
  });
  return parts.join("");
}

function plantPaths() {
  const rnd = createRandom(7);
  const blades: string[] = [];
  for (let i = 0; i < 1900; i++) {
    const t = Math.pow(rnd(), 0.8);
    const left = 330 - 390 * t;
    const right = 1130 + 390 * Math.pow(t, 0.8);
    const x = left + (right - left) * rnd();
    const y = 1278 + 212 * t;
    if (x > 600 && x < 870 && y < 1320) continue;
    const w = 4 + rnd() * 14;
    const h = Math.min(8 + rnd() * 40, 1497 - y + 14);
    const lean = (rnd() - 0.7) * 26;
    const top = y - h * 0.7;
    const bottom = Math.min(y + h * 0.3, 1497);
    blades.push(
      rnd() > 0.45
        ? `M${x | 0} ${top | 0}l${w | 0} ${-4 + ((rnd() * 8) | 0)}L${(x + w - lean) | 0} ${bottom | 0}L${(x - lean) | 0} ${bottom | 0}Z`
        : `M${x | 0} ${top | 0}L${(x - lean) | 0} ${bottom | 0}M${x | 0} ${y | 0}l${(w * 1.6) | 0} ${(rnd() * 16 - 8) | 0}`,
    );
  }
  return blades.join("");
}

function darkPlantPaths() {
  const rnd = createRandom(31);
  let d = "";
  for (let i = 0; i < 300; i++) {
    const t = rnd();
    const x = 260 - 150 * t + (900 + 250 * t) * rnd();
    const y = 1300 + 180 * t;
    if (x > 600 && x < 870 && y < 1320) continue;
    d += `M${x | 0} ${y | 0}l${(2 + rnd() * 5) | 0} ${(8 + rnd() * 14) | 0}`;
  }
  return d;
}

function twigPaths() {
  const rnd = createRandom(12);
  let d = "";
  for (let i = 0; i < 34; i++) {
    const x = 110 + 350 * rnd();
    const y = 110 * rnd();
    d += `M${x | 0} ${y | 0}l${(rnd() * 60 - 30) | 0} ${(30 + rnd() * 90) | 0}`;
  }
  for (let i = 0; i < 26; i++) {
    const x = 190 + 130 * rnd();
    const y = 110 * rnd();
    d += `M${x | 0} ${y | 0}l${(rnd() * 70 - 35) | 0} ${(rnd() * 30 - 15) | 0}`;
  }
  return d;
}

function leafShapes() {
  const rnd = createRandom(5);
  // centre x, centre y, spread, number of leaves
  const clusters: [number, number, number, number][] = [
    [90, 30, 40, 14],
    [190, 70, 60, 34],
    [300, 60, 80, 34],
    [220, 190, 45, 22],
    [340, 200, 42, 34],
    [285, 290, 18, 10],
    [425, 320, 18, 16],
    [440, 220, 34, 16],
    [440, 70, 60, 30],
    [948, 110, 10, 10],
    [1090, 30, 26, 8],
    [1170, 15, 30, 8],
    [770, 60, 10, 5],
  ];
  return clusters.flatMap(([cx, cy, spread, count]) =>
    Array.from({ length: count }, () => ({
      x: cx + (rnd() * 2 - 1) * spread,
      y: cy + (rnd() * 2 - 1) * spread * 1.2,
      r: 7 + rnd() * 5,
      angle: rnd() * 60 - 30,
    })),
  );
}

const TREE_MESH = meshPath(LEFT_TRUNK) + meshPath(RIGHT_TRUNK);
const PLANTS = plantPaths();
const DARK_PLANTS = darkPlantPaths();
const TWIGS = twigPaths();
const LEAVES = leafShapes();

const ROOM_LINES = `
M407 0L517 257L584 403L624 507M450 0L584 356L1003 358L1165 0M1218 0L1083 262L1003 403L957 508
M517 178V257M1083 182V262M584 356V403M1003 358V403
M0 254L517 258M1083 263L1568 267M0 412L693 416M883 417L1393 421M120 506L700 508M873 510L1265 512
M390 562H705M868 564H1047M1080 565H1208M232 567H274M313 568H364
M30 20L375 415L455 507M0 297L365 562M1568 60L1068 563M1568 297L1393 421L1265 512M1264 527L1208 563
M478 525L506 562M636 525L648 564M940 530L928 562
M425 508V523L700 526M425 508L540 523M537 509V523M540 509L700 523M1090 512V526L873 524M880 511L1000 526M985 511L1090 526
M0 441L120 506L232 568L316 611L364 612M364 560L361 963
M0 1003L112 983L228 962L361 946M113 983H700M228 962H361M361 964H715
M945 982H1270M0 1017H396M558 1015H740M870 1015H1052M0 1055L361 964M0 1158L480 972M53 1073H454
M647 963L0 1486M930 963L1568 1393M1072 963L1568 1138M1212 1014H1395M1090 1070H1416M0 1194L1568 1189
M445 898H604L599 970H445ZM445 970L604 898M598 905L597 968
M1395 1012V921L1568 937M1445 920L1568 934M1395 1036L1568 978
M1207 565V592M1207 612L1210 962M1207 571H1265M1265 555L1270 972M1207 614L1252 614L1265 608M1210 940L1270 942M1210 946H1255M1240 961H1268
M580 1018V1070M1090 1070V1110`;

const ROOM_BOLD = `
M0 452L118 515L232 575L314 616L364 616M0 996L112 978L228 956L311 942L361 942
M668 962H720M858 962H1210M1208 962L1395 1013M1395 1036L1568 1085M445 970H599M445 898H604M540 509H700M515 525H700M873 510H940M873 525H985`;

function Scene() {
  return (
    <svg
      viewBox="0 0 1568 1568"
      preserveAspectRatio="none"
      shapeRendering="crispEdges"
      className="absolute inset-0 size-full [&_path]:[vector-effect:non-scaling-stroke]"
      fill="none"
      stroke="#000"
      strokeWidth="1"
      role="img"
      aria-label="Model 3D"
    >
      <path d="M450 0L584 356L1003 358L1165 0Z" fill="#fff" stroke="none" />
      <path
        d="M0 452L118 515L232 575L314 616H364L361 942H311L228 956L112 978L0 996ZM1207 619H1253L1257 943H1210ZM1256 617L1266 613L1269 943H1258Z"
        fill="#f6f9f8"
        stroke="none"
      />
      <path d={ROOM_LINES} />
      <path d={ROOM_BOLD} strokeWidth="2" />
      <path d="M117 507L112 983M232 568L228 960M314 612L311 943M1252 618L1257 943" strokeWidth="4" />
      <path d="M818 1193L863 1568" strokeDasharray="8 2" />
      <path d="M70 371V360H100L230 460M70 360L78 371L103 362" />
      <path d="M72 371H103L230 465H207Z" fill="#111" />
      <path d="M483 526h4v12h-3zM635 526h4v12h-3zM940 528h4v13h-3zM1029 528h4v11h-3z" fill="#000" />

      {/* tree and flower bed */}
      <svg x="441" y="0" width="759.5" height="1248.6" viewBox="0 0 1568 1568" preserveAspectRatio="none" overflow="visible">
        <g fill="#d5dcdb" stroke="none">
          {LEAVES.map((leaf, i) => (
            <ellipse
              key={i}
              cx={leaf.x}
              cy={leaf.y}
              rx={leaf.r}
              ry={leaf.r * 1.5}
              transform={`rotate(${leaf.angle} ${leaf.x} ${leaf.y})`}
            />
          ))}
          <path d="M1262 40q4-24 28-22q10 20-8 36q-16 4-20-14zM1290 15l60-15q0 30-30 35zM1322 160q4-30 34-26q20 20-8 42q-20 6-26-16zM1304 220q10-26 30-22q6 20-18 40q-14-2-12-18zM1400 90q8-30 24-24l-10 50z" />
        </g>
        <path d={TWIGS} />
        <path
          d="M38 15L125 107L185 0M70 77L245 110L350 190L390 100L520 60M70 77L110 30M370 0L490 256L245 143L300 20M365 0L443 396L306 300L357 250
          M443 396L526 255L480 150M278 60L280 353L160 225L275 308M280 353L355 262M240 210L150 0M240 210L270 60M490 195L527 180L520 60M490 195L425 0L328 158L350 190
          M683 0L758 107L770 0M646 95L652 133L669 126L655 15L683 0M949 0L965 205L938 182M1004 0L1018 36L1034 0M1058 0L1091 76L1258 112L1105 0M1258 112L1130 0M1240 0L1288 280M1312 98L1395 0M1312 98L1440 20M160 225L240 210M235 288L160 225"
        />
        <path
          d="M518 0L535 220L533 330L508 442L540 660L572 843L586 930L592 1070L564 1220L640 1275L697 1299L820 1285L866 1275L848 1182L853 1045L862 1020L904 870L884 705L894 640L920 484L932 300L939 200L932 60L952 0H795L760 107L750 145L732 430L725 523L715 610L704 523L690 428L660 325L662 250L646 95V0Z"
          fill="#dae0df"
        />
        <path d="M571 843L586 930L592 1070L570 1200Z" fill="#f6f9f8" />
        <path d="M853 1045L860 1030V1182H846Z" fill="#f6f9f8" />
        <path d="M571 843V1208M858 1030V1208M862 1020V1208M846 1182H860M470 1208H566" />
        <path d={TREE_MESH} />
        <path
          d="M690 450H730M704 523H725M586 930L640 1030M586 920L636 1030M592 1076L628 1062M610 1106L630 1125L720 1050L753 1016M627 772L590 920M636 892L645 1030M683 892L700 784L711 657M698 805L683 892L660 978
          M660 978L598 1199L564 1220M660 978L627 1115M682 1035L662 1048M680 990L682 1035L700 1028M682 1035L709 1149M753 1016L709 1149L682 1170L598 1199L640 1275M806 1031L740 1176L825 1206L846 1182
          M853 1045L740 1176M853 1045L794 1120L709 1149M790 1100L794 1140M732 1165L740 1176L664 1280M709 1149L664 1280M645 1190L664 1280M682 1170L664 1280M825 1206L697 1299M846 1182L697 1299M846 1182L820 1285M846 1182L866 1275M825 1206L664 1280
          M640 1275L664 1280L697 1299L765 1288L820 1285L866 1275M645 1124L683 1136M723 1070L717 1110M717 998L708 810M700 784L717 998L904 870M806 840V1031L904 870M758 823L717 998"
        />
        <path d="M347 1262l18-4l12 40M380 1260h14v34M927 1244h15v40M928 1244l-2 40M1195 1300l14-6l14 50l-14 4zM1267 1295h18v60h-20zM1250 1332h18v40M212 1312h12v40h-12zM180 1350h24l-8 40h-24zM94 1362l20-4l12 34M20 1452l14-4l14 30M52 1430l10-6M1055 1252l10-4l8 30M945 1262l14-8v30M1400 1415h20l-4 30" />
        <path d={PLANTS} />
        <path d={DARK_PLANTS} strokeWidth="2" />
        <path d="M380 1497Q430 1445 475 1440Q530 1445 575 1497M395 1497Q440 1456 480 1450Q525 1456 562 1497M410 1497Q445 1468 480 1462Q520 1468 548 1497M425 1497Q450 1480 480 1476Q510 1480 530 1497M440 1446L430 1497M470 1440V1497M500 1442L510 1497M535 1456L550 1497" />
      </svg>
    </svg>
  );
}

function SceneViewer() {
  return (
    <main className="relative flex-1 overflow-hidden bg-[#dae0df] text-[10px] text-white">
      <Scene />
      <button
        type="button"
        className="absolute top-0 left-0 flex h-[30px] w-[148px] items-center gap-[5px] bg-[#2a2a2a] pl-[8px] font-semibold"
      >
        <svg viewBox="0 0 8 6" className="h-[5px] w-[6px]" aria-hidden="true">
          <path d="M0 0h8L4 6z" fill="#fff" />
        </svg>
        Model Inspector
      </button>

      <button
        type="button"
        aria-label="Adnotacja 1"
        className="absolute top-[570px] left-[977px] size-4 rounded-full bg-[#333]/80 text-[9px] leading-4 text-[#aaa]"
      >
        1
      </button>
      <div
        role="tooltip"
        className="absolute top-[574px] left-[1002px] flex h-[28px] w-[161px] items-center rounded-[2px] bg-[#222]/95 pl-[9px] font-bold"
      >
        Lightweigt scenes
      </div>

      <div className="absolute bottom-[8px] left-[991px] flex h-6 w-[209px] items-center justify-between rounded-full bg-[#949999] px-[11px]">
        <button type="button" aria-label="Poprzednia adnotacja">
          <svg viewBox="0 0 6 8" className="h-[8px] w-[6px]" aria-hidden="true">
            <path d="M6 0v8L0 4z" fill="#fff" />
          </svg>
        </button>
        <span>Lightweigt scenes</span>
        <button type="button" aria-label="Następna adnotacja">
          <svg viewBox="0 0 6 8" className="h-[8px] w-[6px]" aria-hidden="true">
            <path d="M0 0v8l6-4z" fill="#fff" />
          </svg>
        </button>
      </div>

      <div className="absolute right-[4px] bottom-[8px] flex h-6">
        <button type="button" aria-label="Pomoc" className="flex w-8 items-center justify-center">
          <FaQuestion className="size-[9px]" />
        </button>
        <button type="button" aria-label="Ustawienia" className="relative flex w-8 items-center justify-center">
          <FaCog className="size-[11px]" />
          <span className="absolute top-0 left-[18px] h-[10px] w-[13px] rounded-[2px] bg-[#2f9fbd] text-center text-[7px] leading-[10px] font-bold">
            HD
          </span>
        </button>
        <button
          type="button"
          aria-label="Warstwy"
          className="mx-1 flex w-6 items-center justify-center rounded-full bg-[#333]"
        >
          <FaLayerGroup className="size-[11px]" />
        </button>
        <button type="button" aria-label="Tryb VR" className="flex w-8 items-center justify-center">
          <svg viewBox="0 0 26 20" className="h-[10px] w-[13px]" aria-hidden="true">
            <path
              d="M2 0h22l2 2v16l-2 2h-6l-3-5h-4l-3 5H2l-2-2V2zM8 6a3.500 3.500 0 100 7 3.500 3.500 0 000-7zM18 6a3.500 3.500 0 100 7 3.500 3.500 0 000-7z"
              fill="#fff"
              fillRule="evenodd"
            />
          </svg>
        </button>
        <button type="button" aria-label="Zamknij pełny ekran" className="flex w-8 items-center justify-center">
          <FaCompressAlt className="size-[11px]" />
        </button>
      </div>
    </main>
  );
}

/* ---------- Desktop ---------- */

function BrowserWindow() {
  return (
    <section
      aria-label="Przeglądarka"
      className="absolute top-[154px] left-[1300px] flex h-[613px] w-[508px] flex-col bg-white"
    >
      <div className="h-[25px] bg-[#1f0020]" />
      <div className="h-[11px]" />
      <div className="flex h-[26px] items-center justify-end bg-[#dc2a62] pr-[4px]">
        <Gift className="size-[14px] text-white" />
      </div>
      <div className="h-[11px] border-b border-[#ddd]" />
      <div className="h-[49px] border-b border-[#ddd]" />
      <div className="flex flex-1 flex-col pb-[2px]">
        {Array.from({ length: 9 }, (_, i) => (
          <div key={i} className="flex-1 border-b border-[#ddd]" />
        ))}
      </div>
    </section>
  );
}

export default function App() {
  return (
    <div className="flex h-screen min-h-[864px] bg-black font-['Open_Sans','Noto_Sans',sans-serif] text-[9px]">
      <div className="flex flex-1 flex-col">
        <div className="relative flex-1">
          <BrowserWindow />
          <ExplorerWindow
            title="maps"
            position="top-[53px] left-[876px]"
            toolLabel="Zarządzanie"
            toolTab=""
            toolWidth="w-[101px]"
            toolColor="bg-[#f0f084]"
            covered
          />

          <ExplorerWindow
            title="Pobrane"
            position="top-[74px] left-[897px]"
            icon="download"
            toolLabel="Wypakowywanie"
            toolTab="Narzędzia folderów skompresowanych"
            toolWidth="w-[181px]"
            toolColor="bg-[#fcc4de]"
            covered
          >
            <Ribbon covered />
            <AddressBar title="Pobrane" crumbs={[]} />
            <div className="flex min-h-0 flex-1">
              <CoveredNavPane />
              <ScrollBar before="h-[105px]" thumb="h-[401px]" />
              <FileTable groups={FILES_POBRANE} grouped />
              <ScrollBar before="h-0" thumb="h-[124px]" />
            </div>
            <StatusBar items={[]} />
          </ExplorerWindow>

          <ExplorerWindow
            title="prv"
            position="top-[88px] left-[318px]"
            toolLabel="Zarządzanie"
            toolTab="Narzędzia obrazów"
            toolWidth="w-[101px]"
            toolColor="bg-[#f0f084]"
          >
            <Ribbon covered={false} />
            <AddressBar
              title="prv"
              crumbs={["Sieć", "WMS-NAS", "wm_projekty_nas", "01_PROJEKTY_D", "368_VR_HUB", "prv"]}
            />
            <div className="flex min-h-0 flex-1">
              <NavPane />
              <ScrollBar before="h-[120px]" thumb="h-[401px]" />
              <FileTable groups={FILES_PRV} grouped={false} />
            </div>
            <StatusBar items={["Elementy: 2", "Zaznaczonych elementów: 2. 871 KB"]} />
          </ExplorerWindow>
        </div>
        <Taskbar />
      </div>
      <SceneViewer />
    </div>
  );
}
